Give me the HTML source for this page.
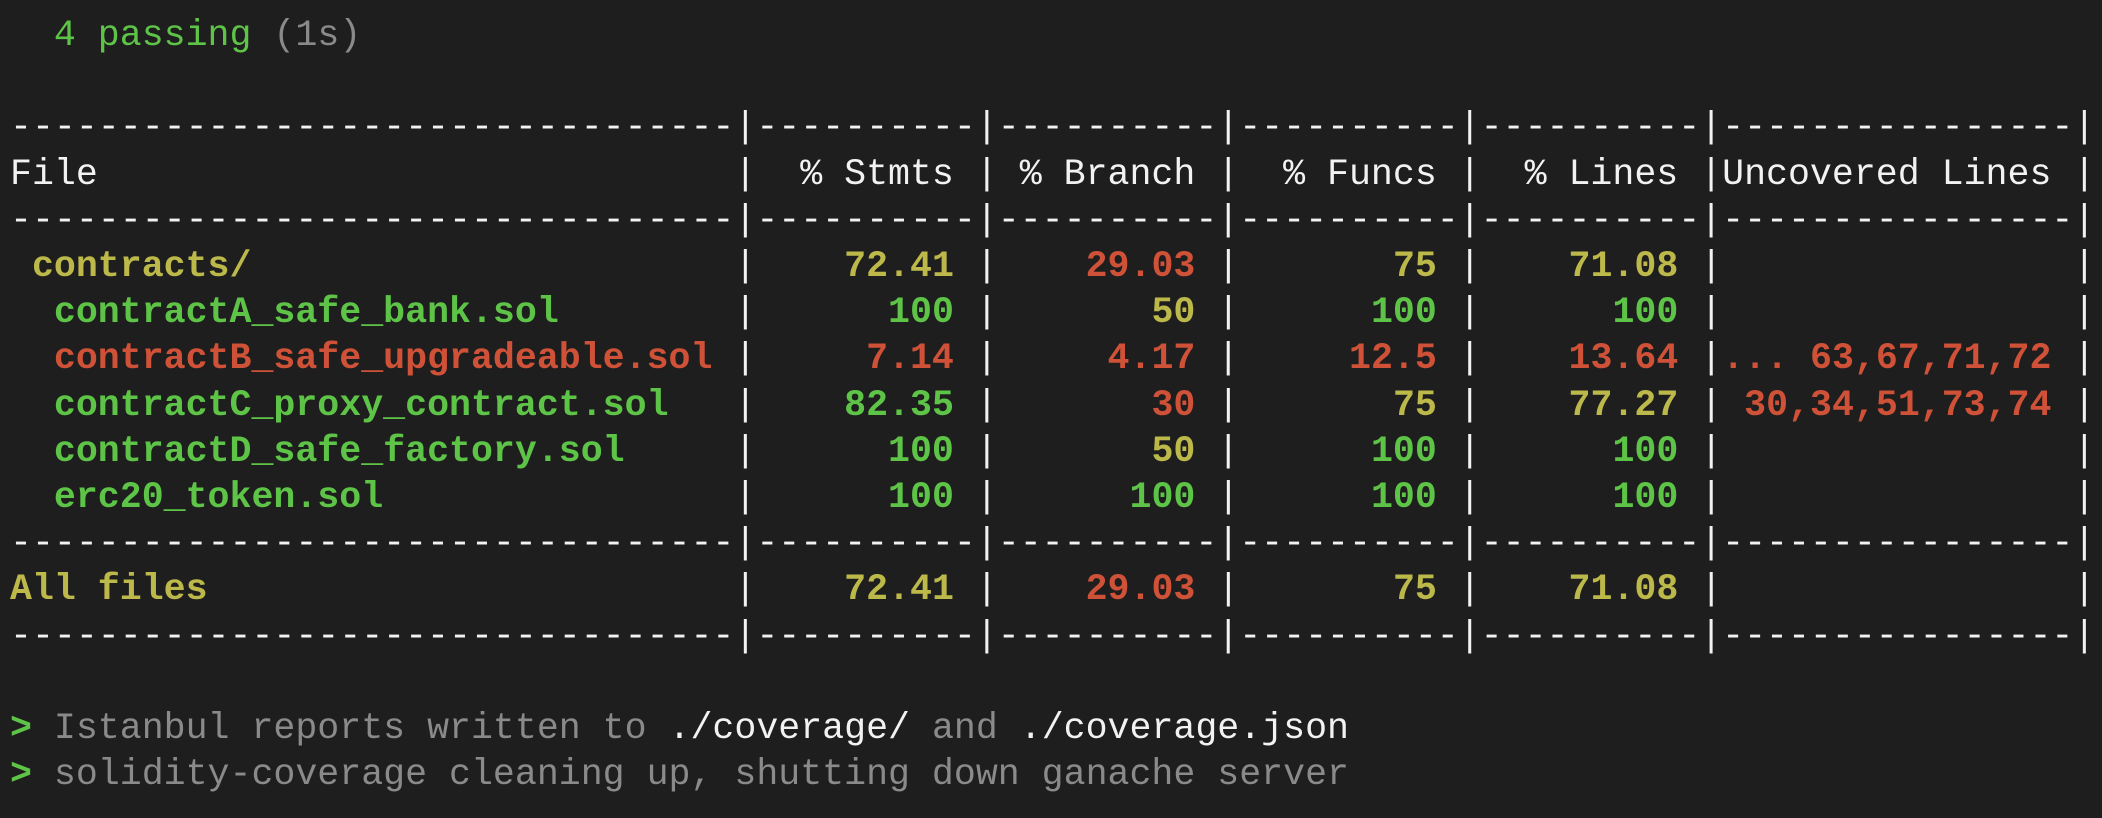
<!DOCTYPE html>
<html><head><meta charset="utf-8"><style>
html,body{margin:0;padding:0;background:#1e1e1e;width:2102px;height:818px;overflow:hidden}
pre{margin:0;padding:13px 0 0 10px;font-family:"Liberation Mono",monospace;font-size:36.6px;line-height:46.2px;color:#f2f2f2;white-space:pre}
.g{color:#5ec447;font-weight:bold}
.y{color:#bcb94a;font-weight:bold}
.r{color:#cf5238;font-weight:bold}
.gn{color:#5ec447}
.gr{color:#8a8a8a}
</style></head><body><pre>  <span class="gn">4 passing</span> <span class="gr">(1s)</span>

---------------------------------|----------|----------|----------|----------|----------------|
File                             |  % Stmts | % Branch |  % Funcs |  % Lines |Uncovered Lines |
---------------------------------|----------|----------|----------|----------|----------------|
 <span class="y">contracts/</span>                      |    <span class="y">72.41</span> |    <span class="r">29.03</span> |       <span class="y">75</span> |    <span class="y">71.08</span> |                |
  <span class="g">contractA_safe_bank.sol</span>        |      <span class="g">100</span> |       <span class="y">50</span> |      <span class="g">100</span> |      <span class="g">100</span> |                |
  <span class="r">contractB_safe_upgradeable.sol</span> |     <span class="r">7.14</span> |     <span class="r">4.17</span> |     <span class="r">12.5</span> |    <span class="r">13.64</span> |<span class="r">... 63,67,71,72</span> |
  <span class="g">contractC_proxy_contract.sol</span>   |    <span class="g">82.35</span> |       <span class="r">30</span> |       <span class="y">75</span> |    <span class="y">77.27</span> | <span class="r">30,34,51,73,74</span> |
  <span class="g">contractD_safe_factory.sol</span>     |      <span class="g">100</span> |       <span class="y">50</span> |      <span class="g">100</span> |      <span class="g">100</span> |                |
  <span class="g">erc20_token.sol</span>                |      <span class="g">100</span> |      <span class="g">100</span> |      <span class="g">100</span> |      <span class="g">100</span> |                |
---------------------------------|----------|----------|----------|----------|----------------|
<span class="y">All files</span>                        |    <span class="y">72.41</span> |    <span class="r">29.03</span> |       <span class="y">75</span> |    <span class="y">71.08</span> |                |
---------------------------------|----------|----------|----------|----------|----------------|

<span class="g">&gt;</span> <span class="gr">Istanbul reports written to</span> ./coverage/ <span class="gr">and</span> ./coverage.json
<span class="g">&gt;</span> <span class="gr">solidity-coverage cleaning up, shutting down ganache server</span>
</pre></body></html>
